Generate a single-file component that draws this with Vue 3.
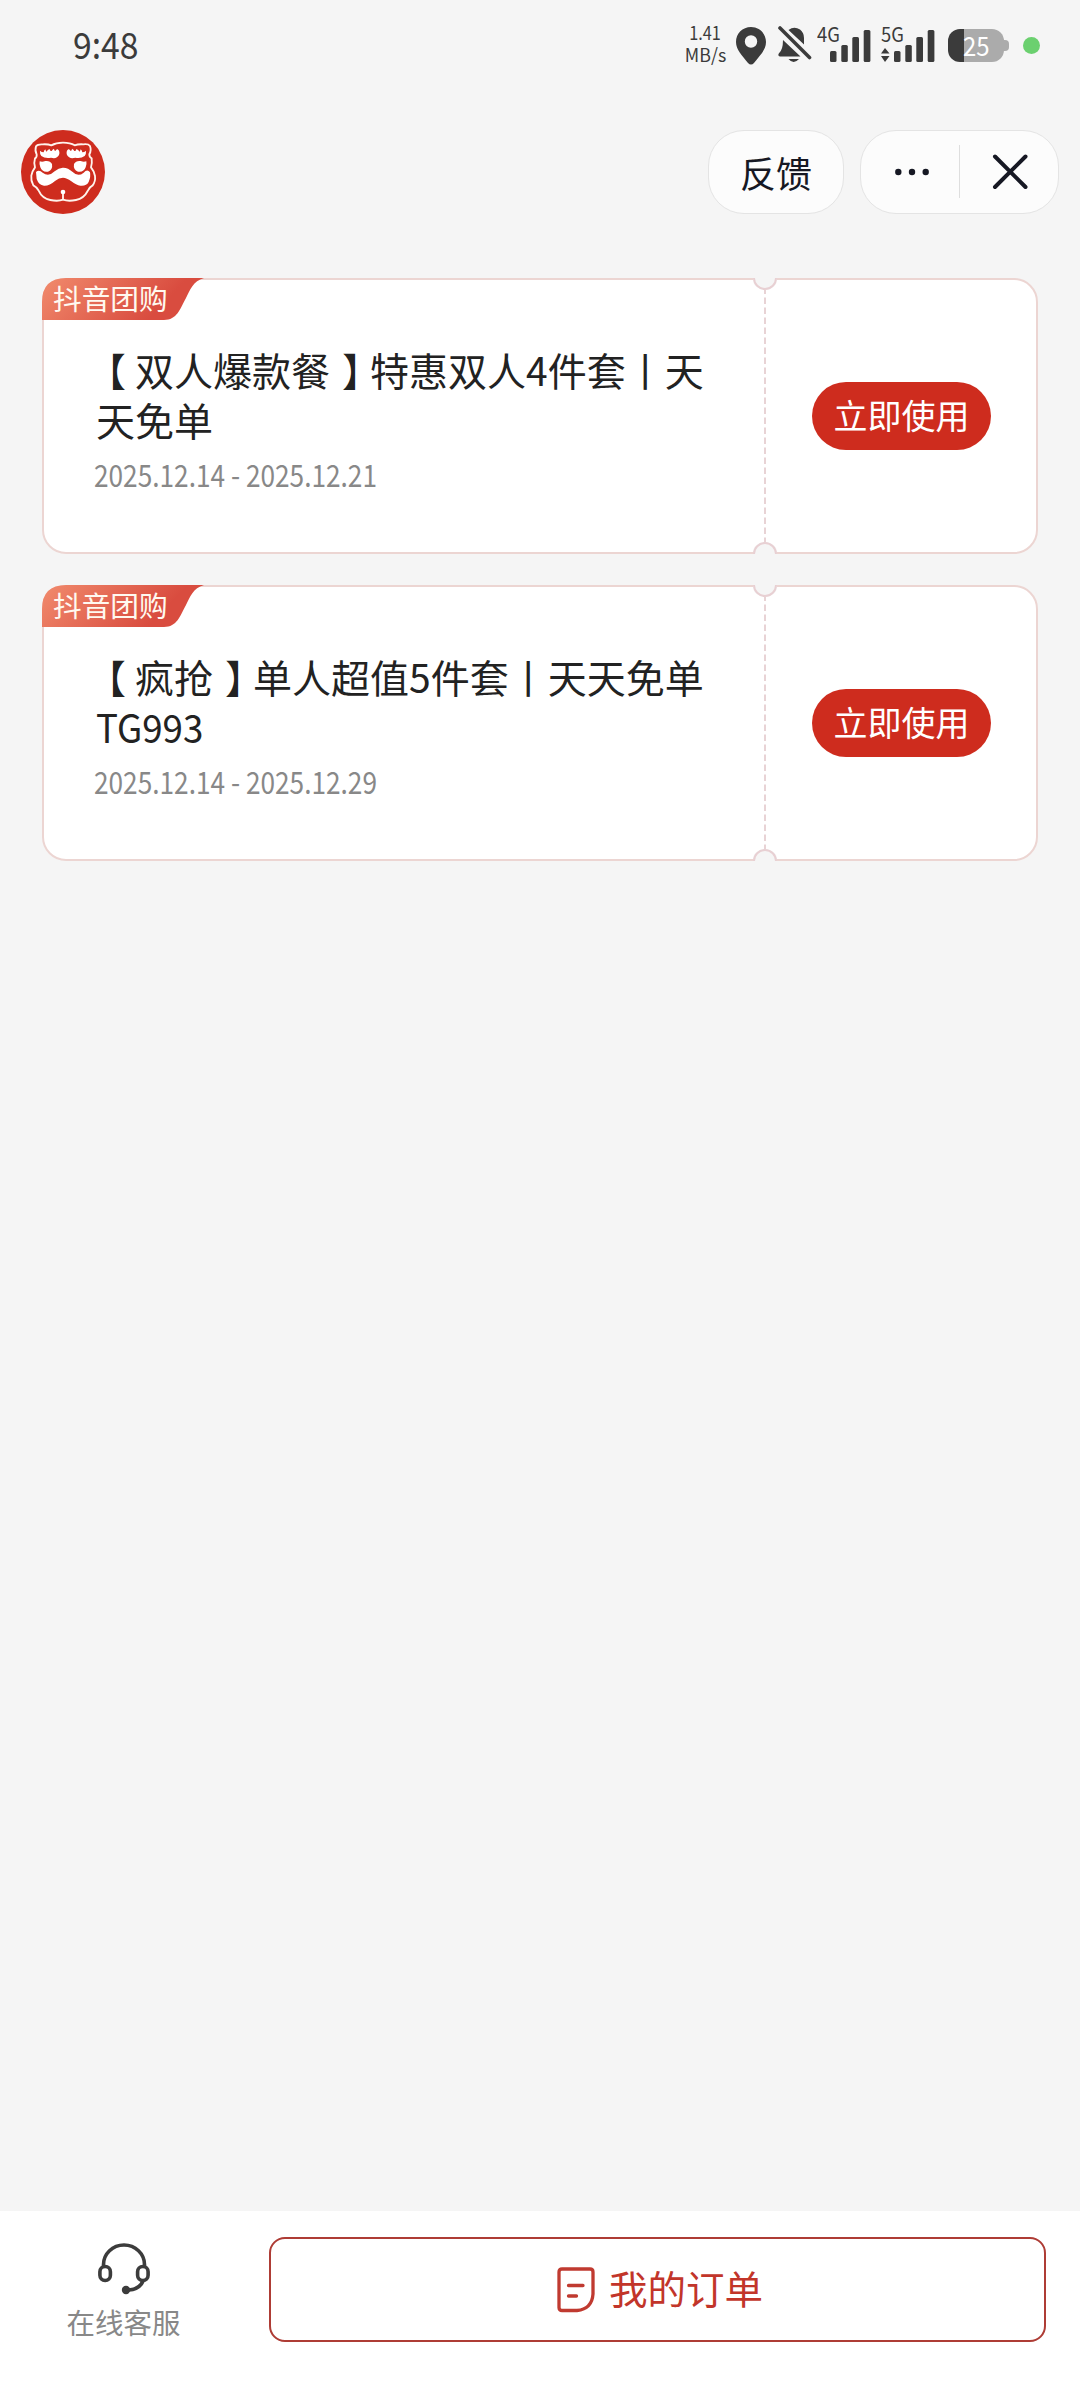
<script setup>
const coupons = [
  { id: 1, name: '双人爆款餐', lines: ['特惠双人4件套丨天', '天免单'], date: '2025.12.14 - 2025.12.21' },
  { id: 2, name: '疯抢', lines: ['单人超值5件套丨天天免单', 'TG993'], date: '2025.12.14 - 2025.12.29' },
]
</script>

<template>
  <div class="page">
    <header class="status">
      <span class="time">9:48</span>
      <div class="status-icons">
        <div class="speed"><span class="rate">1.41</span><span class="unit">MB/s</span></div>
        <svg class="pin" width="30" height="38" viewBox="0 0 30 38">
          <path fill="#3b3b3b" fill-rule="evenodd" d="M15 0C6.500 0 0 6.500 0 15c0 8 6 13 12 21q3 3 6 0c6-8 12-13 12-21C30 6.500 23.500 0 15 0ZM15 8.300a6.200 6.200 0 1 1 0 12.400a6.200 6.200 0 1 1 0-12.400Z" />
        </svg>
        <svg class="bell" width="34" height="37" viewBox="0 0 34 37">
          <path fill="#3b3b3b" d="M5 14L22.500 30.500H2Q-.5 30 .8 27.500Q5 24 5 14ZM10.500 4Q16 0 22 3.500Q26 6.500 26 12V18.500ZM10.500 33H21Q15.500 39 10.500 33Z" />
          <path stroke="#3b3b3b" stroke-width="3.600" stroke-linecap="round" d="M2 2L31.500 31.500" />
        </svg>
        <div class="signal">
          <span class="net">4G</span>
          <svg width="54" height="38" viewBox="0 0 54 38" fill="#3b3b3b">
            <rect x="13" y="25" width="6.500" height="11" rx="1.500" /><rect x="24.300" y="19" width="6.500" height="17" rx="1.500" />
            <rect x="35.300" y="11" width="6.700" height="25" rx="1.500" /><rect x="46.700" y="4" width="6.700" height="32" rx="1.500" />
          </svg>
        </div>
        <div class="signal five">
          <span class="net">5G</span>
          <svg width="54" height="38" viewBox="0 0 54 38" fill="#3b3b3b">
            <path d="M0 27.500L4 22L8.500 27.500ZM0 30L4 36L8.500 30Z" />
            <rect x="13" y="25" width="6.500" height="11" rx="1.500" /><rect x="24.300" y="19" width="6.500" height="17" rx="1.500" />
            <rect x="35.300" y="11" width="6.700" height="25" rx="1.500" /><rect x="46.700" y="4" width="6.700" height="32" rx="1.500" />
          </svg>
        </div>
        <div class="battery"><span class="level">25</span></div>
        <i class="dot"></i>
      </div>
    </header>

    <nav class="nav">
      <svg class="logo" width="84" height="84" viewBox="63 60 252 252">
        <circle cx="189" cy="186" r="126" fill="#ce2c1e" />
        <path fill="none" stroke="#fff3ec" stroke-width="5.500" stroke-linejoin="round" d="M189 269Q174 275 151 270Q126 265 116 242Q112 232 100 226Q92 212 94 197Q96 184 105 172Q101 158 105 145Q111 142 110 133Q104 122 108 109Q113 102 128 103Q144 102 154 106Q168 98 189 98Q211 98 224 106Q234 102 250 103Q265 101 270 108Q275 121 268 133Q268 142 275 145Q277 160 273 172Q283 184 285 198Q287 214 278 226Q267 232 263 243Q252 265 228 270Q205 275 189 269V249" />
        <circle cx="189" cy="246" r="7" fill="#fff" />
        <g fill="#fff">
          <path d="M108 186Q117 177 128 188Q146 202 164 184Q177 172 190 173Q204 173 218 186Q234 202 251 188Q262 175 270 187Q273 200 266 216Q259 229 241 227Q229 226 214 214Q200 203 189 203Q177 203 165 213Q148 228 132 227Q116 225 110 207Z" />
          <path d="M120 122Q119 132 124 138Q135 146 153 143Q170 148 177 135Q181 124 173 118Q169 117 166 123Q162 122 162 116Q157 118 155 123Q149 124 149 117Q142 119 140 125Q137 123 136 118Q132 121 131 127Q125 127 120 122Z" />
          <path d="M258 122Q259 132 254 138Q243 146 226 143Q208 148 201 135Q197 124 205 118Q209 117 212 123Q216 122 216 116Q221 118 223 123Q229 124 229 117Q236 119 238 125Q241 123 242 118Q246 121 247 127Q253 127 258 122Z" />
          <path d="M119 154Q127 157 136 153Q150 151 156 162Q159 179 144 185Q127 188 121 172Q117 163 119 154Z" />
          <path d="M259 154Q251 157 242 153Q228 151 222 162Q219 179 234 185Q251 188 257 172Q261 163 259 154Z" />
        </g>
      </svg>
      <button class="pill feedback">反馈</button>
      <div class="pill capsule">
        <svg width="197" height="82" viewBox="0 0 197 82">
          <g fill="#161823"><circle cx="37.300" cy="41" r="3.200" /><circle cx="51" cy="41" r="3.200" /><circle cx="64.700" cy="41" r="3.200" /></g>
          <path stroke="#dedede" d="M98.500 14V67" />
          <path stroke="#161823" stroke-width="4" stroke-linecap="round" d="M134 25.500L164.500 56M164.500 25.500L134 56" />
        </svg>
      </div>
    </nav>

    <main class="list">
      <article v-for="c in coupons" :key="c.id" class="coupon">
        <div class="tag">
          <svg class="tag-bg" width="162" height="42" viewBox="0 0 162 42">
            <defs><linearGradient :id="'tag' + c.id" x1="0" y1="0" x2="1" y2=".25"><stop offset="0" stop-color="#f18b6d" /><stop offset=".85" stop-color="#d94c3f" /></linearGradient></defs>
            <path :fill="`url(#tag${c.id})`" d="M0 24Q0 0 24 0H162C151 3 148 12 144 20C138 31 135 42 122 42H0Z" />
          </svg>
          <span class="tag-text">抖音团购</span>
        </div>
        <div class="info">
          <h2 class="title"><span class="open">【</span>{{ c.name }}<span class="close">】</span>{{ c.lines[0] }}<br /><span :class="{ latin: c.id === 2 }">{{ c.lines[1] }}</span></h2>
          <div class="date">{{ c.date }}</div>
        </div>
        <svg class="perforation" width="26" height="276" viewBox="0 0 26 276">
          <path fill="#f5f5f5" d="M1 0H25V2A12 10 0 0 1 1 2ZM1 276H25V274A12 10 0 0 0 1 274Z" />
          <path fill="none" stroke="#e8d0d3" stroke-width="2" d="M2 0A11 11 0 0 0 24 0M2 276A11 11 0 0 1 24 276" />
          <path stroke="#e8d3d5" stroke-width="2" stroke-dasharray="6.500 3.500" stroke-dashoffset="2.500" d="M13 12V264" />
        </svg>
        <div class="action"><button class="use">立即使用</button></div>
      </article>
    </main>

    <footer class="bottom">
      <div class="service">
        <svg width="52" height="52" viewBox="0 0 52 52" fill="none" stroke="#3c3c3c" stroke-width="3.600">
          <path d="M5.500 23V21.500A20.500 19.500 0 0 1 46.500 21.500V23M45 38Q42 46 31 47H28" />
          <rect x="1.900" y="23.500" width="10.500" height="14" rx="5.200" /><rect x="39.600" y="23.500" width="10.500" height="14" rx="5.200" />
          <circle cx="28" cy="47" r="4.200" fill="#3c3c3c" stroke="none" />
        </svg>
        <span>在线客服</span>
      </div>
      <button class="orders">
        <svg width="38" height="46" viewBox="0 0 38 46" fill="none" stroke="#c03a30" stroke-width="3.300" stroke-linecap="round">
          <path d="M5 2H33Q36 2 36 5V27Q35 42 20 43.500H5Q2 43.500 2 40.500V5Q2 2 5 2Z" />
          <path d="M11.500 18.500H26M11.500 29H19.500" />
        </svg>
        <span>我的订单</span>
      </button>
    </footer>
  </div>
</template>

<style>
body { background: #f5f5f5; }
</style>

<style scoped>
* { box-sizing: border-box; }
.page { display: flex; flex-direction: column; width: 1080px; height: 2400px; overflow: hidden; background: #f5f5f5; font-family: "Noto Sans CJK SC", "Noto Sans", sans-serif; color: #222; }
button { font-family: inherit; padding: 0; margin: 0; }
svg { display: block; flex: none; }
.status { display: flex; justify-content: space-between; height: 90px; padding-left: 73px; color: #3b3b3b; }
.time { font-size: 37px; line-height: 87px; height: 87px; transform: scaleX(.91); transform-origin: left; }
.status-icons { display: flex; align-items: flex-start; width: 395px; padding-top: 26px; }
.speed { display: flex; flex-direction: column; align-items: center; width: 42px; font-size: 18.500px; line-height: 22px; white-space: nowrap; margin-top: -5px; }
.rate { transform: scaleX(.88); margin-right: 3px; }
.unit { transform: scaleX(.96); }
.pin { margin: 1px 0 0 9px; }
.bell { margin-left: 12px; }
.signal { position: relative; margin-left: 5px; }
.signal.five { margin-left: 10px; }
.net { position: absolute; left: 0; top: -5px; font-size: 20px; line-height: 26px; transform: scaleX(.92); transform-origin: left; }
.battery { position: relative; display: flex; align-items: center; width: 56px; height: 33px; margin: 3px 0 0 13px; padding-left: 15px; border-radius: 12px; background: linear-gradient(90deg, #3b3b3b 15.5px, #ababab 15.5px); }
.battery::after { content: ""; position: absolute; right: -5px; top: 11px; width: 7px; height: 11px; border-radius: 0 4px 4px 0; background: #ababab; }
.level { font-size: 26px; line-height: 33px; margin-top: -3px; color: #fff; transform: scaleX(.92); transform-origin: left; }
.dot { width: 17px; height: 17px; margin: 11px 0 0 19px; border-radius: 50%; background: #6bd06f; }
.nav { display: flex; align-items: center; height: 84px; margin-top: 40px; padding: 0 21px; }
.logo { margin-right: auto; }
.pill { height: 84px; border: 1px solid #e4e4e4; border-radius: 36px; background: #fcfcfc; }
.feedback { width: 136px; margin-right: 16px; font-size: 36px; line-height: 80px; color: #161823; }
.capsule { width: 199px; }
.list { display: flex; flex-direction: column; gap: 31px; margin: 64px 42px 0; }
.coupon { position: relative; display: flex; height: 276px; border: 2px solid #ecd5d2; border-radius: 24px; background: #fff; }
.tag { position: absolute; left: -2px; top: -2px; width: 162px; height: 42px; }
.tag-bg { position: absolute; left: 0; top: 0; }
.tag-text { position: relative; display: block; padding-left: 11px; font-size: 28.700px; line-height: 39px; color: #fff9f0; white-space: nowrap; }
.info { width: 708px; padding: 64px 0 0 52px; }
.title { margin: 0; font-size: 39px; line-height: 50px; font-weight: 400; color: #222; white-space: nowrap; }
.open, .close { font-feature-settings: "halt"; }
.open { margin: 0 9px 0 10.500px; }
.close { margin: 0 8.500px 0 12px; }
.latin { display: inline-block; transform: scaleX(.94); transform-origin: left; }
.date { display: inline-block; margin-top: 8px; margin-left: -2px; font-size: 30.500px; line-height: 44px; color: #888; white-space: nowrap; transform: scaleX(.86); transform-origin: left; }
.perforation { margin: -2px 0; }
.action { display: flex; flex: 1; align-items: center; padding-left: 34px; }
.use { width: 179px; height: 68px; border: 0; border-radius: 34px; background: #ce2c1e; color: #fff; font-size: 34px; line-height: 65px; padding-bottom: 3px; }
.bottom { display: flex; align-items: flex-start; height: 189px; margin-top: auto; background: #fff; }
.service { display: flex; flex-direction: column; align-items: center; width: 247px; padding-top: 32px; color: #888; font-size: 28.500px; line-height: 40px; }
.service span { margin-top: 7px; }
.orders { display: flex; align-items: center; justify-content: center; gap: 14px; width: 777px; height: 105px; margin: 26px 0 0 22px; padding-left: 5px; border: 2px solid #ae3c35; border-radius: 16px; background: #fff; color: #c2352a; font-size: 38.500px; line-height: 56px; }
.orders span { margin-top: -6px; }
</style>
